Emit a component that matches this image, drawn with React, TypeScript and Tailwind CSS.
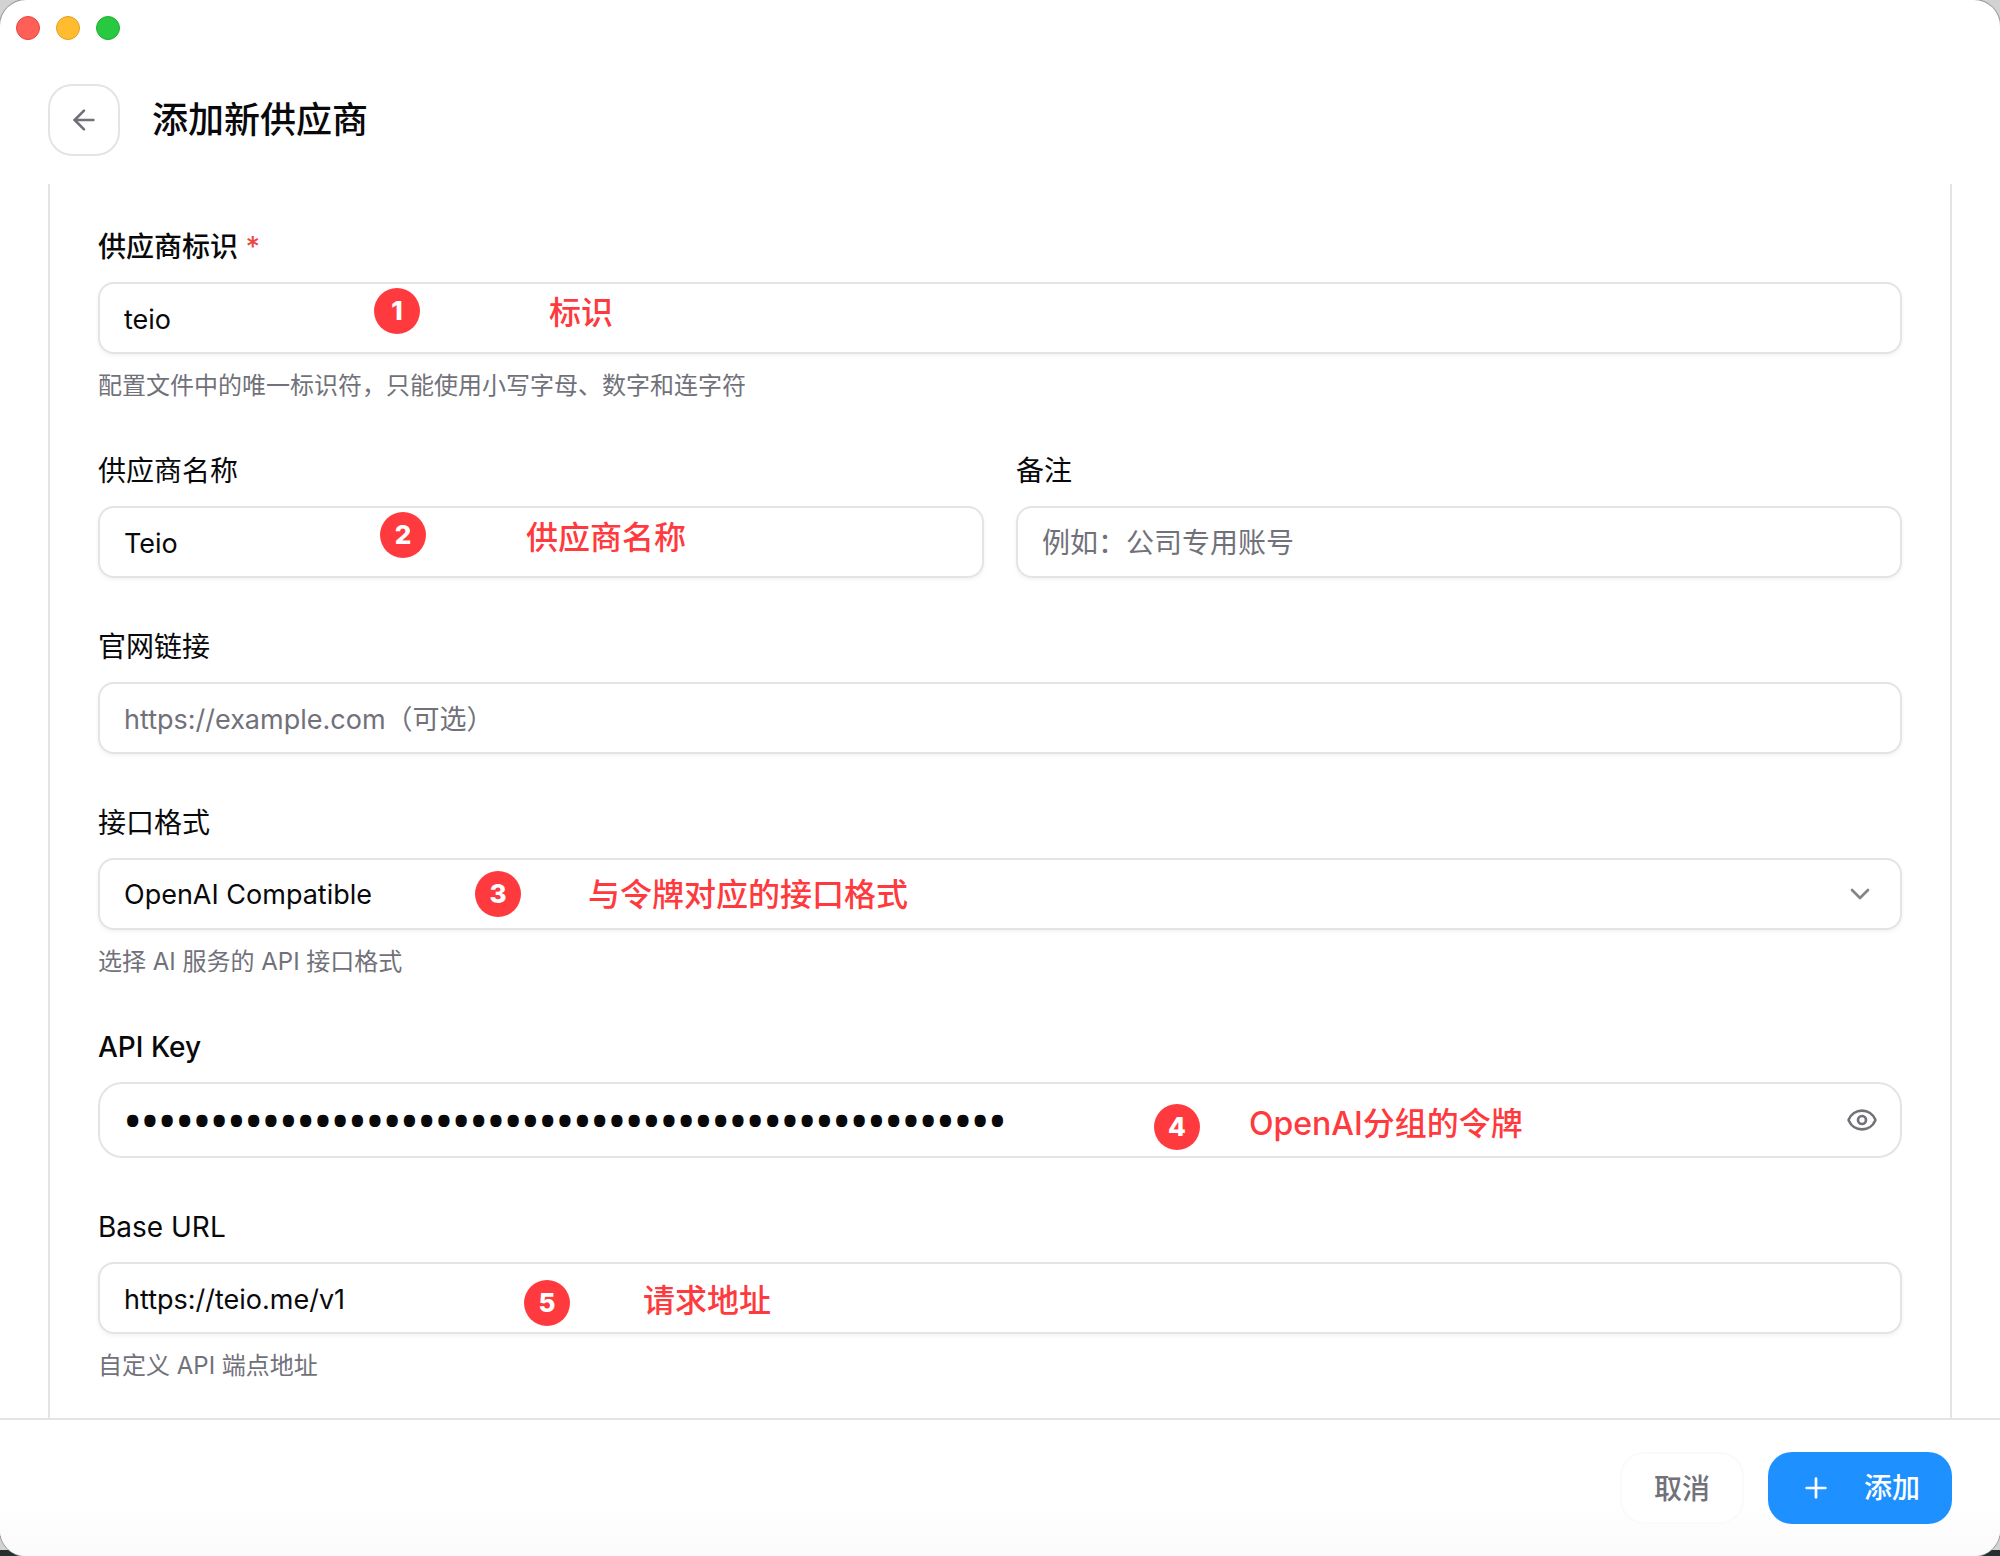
import { useState, type ReactNode } from "react";
import { ArrowLeft, ChevronDown, Eye, EyeOff, Plus } from "lucide-react";

const inputClass =
  "block h-[72px] w-full rounded-2xl border-2 border-[#e4e4e4] bg-white px-6 pt-[2px] text-[#09090b] shadow-[0_2px_4px_rgba(0,0,0,0.05)] outline-none placeholder:text-[#71717a] placeholder:opacity-100";

function Field({
  id,
  label,
  required,
  strong,
  hint,
  children,
}: {
  id: string;
  label: string;
  required?: boolean;
  strong?: boolean;
  hint?: string;
  children: ReactNode;
}) {
  return (
    <div className="flex min-w-0 flex-col gap-4">
      <label
        htmlFor={id}
        className={
          strong
            ? "pt-[2px] text-[28px] leading-[38px] font-medium"
            : "pt-[2px] text-[28px] leading-[38px]"
        }
      >
        {label}
        {required && <span className="text-[#ef4444]"> *</span>}
      </label>
      <div className="relative">{children}</div>
      {hint && (
        <p className="text-[24px] leading-8 text-[#71717a]">{hint}</p>
      )}
    </div>
  );
}

// 步骤标注，浮在输入框上方
function Step({ n, pin, note, text }: { n: number; pin: string; note: string; text: string }) {
  return (
    <>
      <span
        className={`pointer-events-none absolute flex size-[46px] items-center justify-center rounded-full bg-[#ff3a3e] text-[26px] leading-none font-extrabold text-white ${pin}`}
      >
        {n}
      </span>
      <span
        className={`pointer-events-none absolute text-[32px] leading-10 font-medium whitespace-nowrap text-[#ff3a3e] ${note}`}
      >
        {text}
      </span>
    </>
  );
}

export default function App() {
  const [providerId, setProviderId] = useState("teio");
  const [name, setName] = useState("Teio");
  const [remark, setRemark] = useState("");
  const [website, setWebsite] = useState("");
  const [format, setFormat] = useState("openai");
  const [apiKey, setApiKey] = useState("x".repeat(51));
  const [baseUrl, setBaseUrl] = useState("https://teio.me/v1");
  const [showKey, setShowKey] = useState(false);

  return (
    <div className="bg-[linear-gradient(to_top,#26302f_0_6px,#d2d2d2_6px)] font-['Inter','Noto_Sans_CJK_SC',sans-serif] text-[#09090b]">
      <div className="flex min-h-screen flex-col overflow-hidden rounded-[26px] bg-white shadow-[0_0_0_1px_#9a9a9a]">
        <div className="flex h-14 items-center gap-4 px-4">
          <button aria-label="关闭" className="size-6 rounded-full border border-[#e2463f] bg-[#ff5f57]" />
          <button aria-label="最小化" className="size-6 rounded-full border border-[#e0a028] bg-[#febc2e]" />
          <button aria-label="缩放" className="size-6 rounded-full border border-[#1fae34] bg-[#28c840]" />
        </div>

        <header className="flex items-center gap-8 px-12 py-7">
          <button
            aria-label="返回"
            className="flex size-[72px] items-center justify-center rounded-3xl border-2 border-[#e4e4e4] text-[#71717a]"
          >
            <ArrowLeft size={32} />
          </button>
          <h1 className="text-[36px] leading-[48px] font-medium">添加新供应商</h1>
        </header>

        <main className="flex flex-1 flex-col px-12">
          <form className="flex flex-1 flex-col gap-12 border-x-2 border-[#e4e4e4] px-12 pt-[42px]">
            <Field
              id="provider-id"
              label="供应商标识"
              required
              strong
              hint="配置文件中的唯一标识符，只能使用小写字母、数字和连字符"
            >
              <input
                id="provider-id"
                className={`${inputClass} text-[27px]`}
                value={providerId}
                onChange={(e) => setProviderId(e.target.value)}
              />
              <Step n={1} pin="left-[276px] top-[6px]" note="left-[451px] top-[11px]" text="标识" />
            </Field>

            <div className="grid grid-cols-2 gap-8">
              <Field id="name" label="供应商名称">
                <input
                  id="name"
                  className={`${inputClass} text-[27px]`}
                  value={name}
                  onChange={(e) => setName(e.target.value)}
                />
                <Step n={2} pin="left-[282px] top-[6px]" note="left-[428px] top-[12px]" text="供应商名称" />
              </Field>
              <Field id="remark" label="备注">
                <input
                  id="remark"
                  className={`${inputClass} text-[28px]`}
                  placeholder="例如：公司专用账号"
                  value={remark}
                  onChange={(e) => setRemark(e.target.value)}
                />
              </Field>
            </div>

            <Field id="website" label="官网链接">
              <input
                id="website"
                className={`${inputClass} text-[27px]`}
                placeholder="https://example.com（可选）"
                value={website}
                onChange={(e) => setWebsite(e.target.value)}
              />
            </Field>

            <Field id="format" label="接口格式" hint="选择 AI 服务的 API 接口格式">
              <select
                id="format"
                className={`${inputClass} appearance-none text-[27px]`}
                value={format}
                onChange={(e) => setFormat(e.target.value)}
              >
                <option value="openai">OpenAI Compatible</option>
              </select>
              <ChevronDown
                size={32}
                className="pointer-events-none absolute top-5 right-[26px] text-[#858585]"
              />
              <Step n={3} pin="left-[377px] top-[13px]" note="left-[490px] top-[17px]" text="与令牌对应的接口格式" />
            </Field>

            <Field id="api-key" label="API Key" strong>
              <input
                id="api-key"
                type={showKey ? "text" : "password"}
                autoComplete="off"
                className={`block h-[76px] w-full rounded-3xl border-2 border-[#e4e4e4] bg-white pr-20 pb-[2px] pl-6 text-[#09090b] outline-none ${
                  showKey ? "text-[27px]" : "font-['Open_Sans',sans-serif] text-[46px] font-semibold"
                }`}
                value={apiKey}
                onChange={(e) => setApiKey(e.target.value)}
              />
              <button
                type="button"
                aria-label="显示或隐藏 API Key"
                onClick={() => setShowKey(!showKey)}
                className="absolute inset-y-0 right-6 flex items-center text-[#71717a]"
              >
                {showKey ? <EyeOff size={32} /> : <Eye size={32} />}
              </button>
              <Step n={4} pin="left-[1056px] top-[22px]" note="left-[1151px] top-[22px]" text="OpenAI分组的令牌" />
            </Field>

            <Field id="base-url" label="Base URL" hint="自定义 API 端点地址">
              <input
                id="base-url"
                className={`${inputClass} text-[27px]`}
                value={baseUrl}
                onChange={(e) => setBaseUrl(e.target.value)}
              />
              <Step n={5} pin="left-[426px] top-[18px]" note="left-[545px] top-[19px]" text="请求地址" />
            </Field>
          </form>
        </main>

        <footer className="flex items-center justify-end gap-6 border-t-2 border-[#e4e4e4] bg-linear-to-b from-white from-60% to-[#fafafa] px-12 py-8">
          <button className="h-[72px] rounded-3xl border-2 border-[#fafafa] bg-white px-8 pt-[2px] text-[28px] font-medium text-[#71717a]">
            取消
          </button>
          <button className="flex h-[72px] items-center gap-8 rounded-3xl bg-[#1e90ff] px-8 text-[28px] font-medium text-white">
            <Plus size={32} />
            添加
          </button>
        </footer>
      </div>
    </div>
  );
}
